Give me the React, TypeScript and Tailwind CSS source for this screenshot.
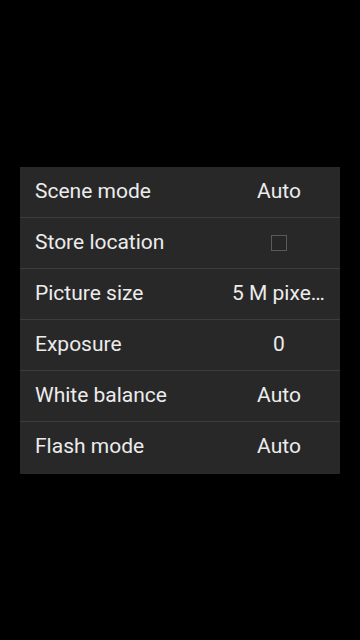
import React from 'react';

type Row = { label: string; value?: string; checkbox?: boolean };

const ROWS: Row[] = [
  { label: 'Scene mode', value: 'Auto' },
  { label: 'Store location', checkbox: true },
  { label: 'Picture size', value: '5 M pixels' },
  { label: 'Exposure', value: '0' },
  { label: 'White balance', value: 'Auto' },
  { label: 'Flash mode', value: 'Auto' },
];

export default function App() {
  return (
    <div
      className="h-[640px] w-[360px] bg-black flex items-center justify-center"
      style={{ fontFamily: 'Roboto, "Noto Sans", sans-serif' }}
    >
      <div className="w-[320px] bg-[#282828] flex flex-col divide-y divide-[#3c3c3c] pb-[1px]">
        {ROWS.map((r) => (
          <div key={r.label} className="h-[51px] flex items-center pl-[15px] pr-[9px]">
            <span className="flex-1 text-[21px] text-[#ececec] whitespace-nowrap">{r.label}</span>
            <div className="w-[104px] flex justify-center">
              {r.checkbox ? (
                <span className="w-[16px] h-[16px] border border-[#5a5a5a] bg-[#262626]" />
              ) : (
                <span className="text-[21px] text-[#ececec] whitespace-nowrap overflow-hidden text-ellipsis max-w-[94px]">
                  {r.value}
                </span>
              )}
            </div>
          </div>
        ))}
      </div>
    </div>
  );
}
